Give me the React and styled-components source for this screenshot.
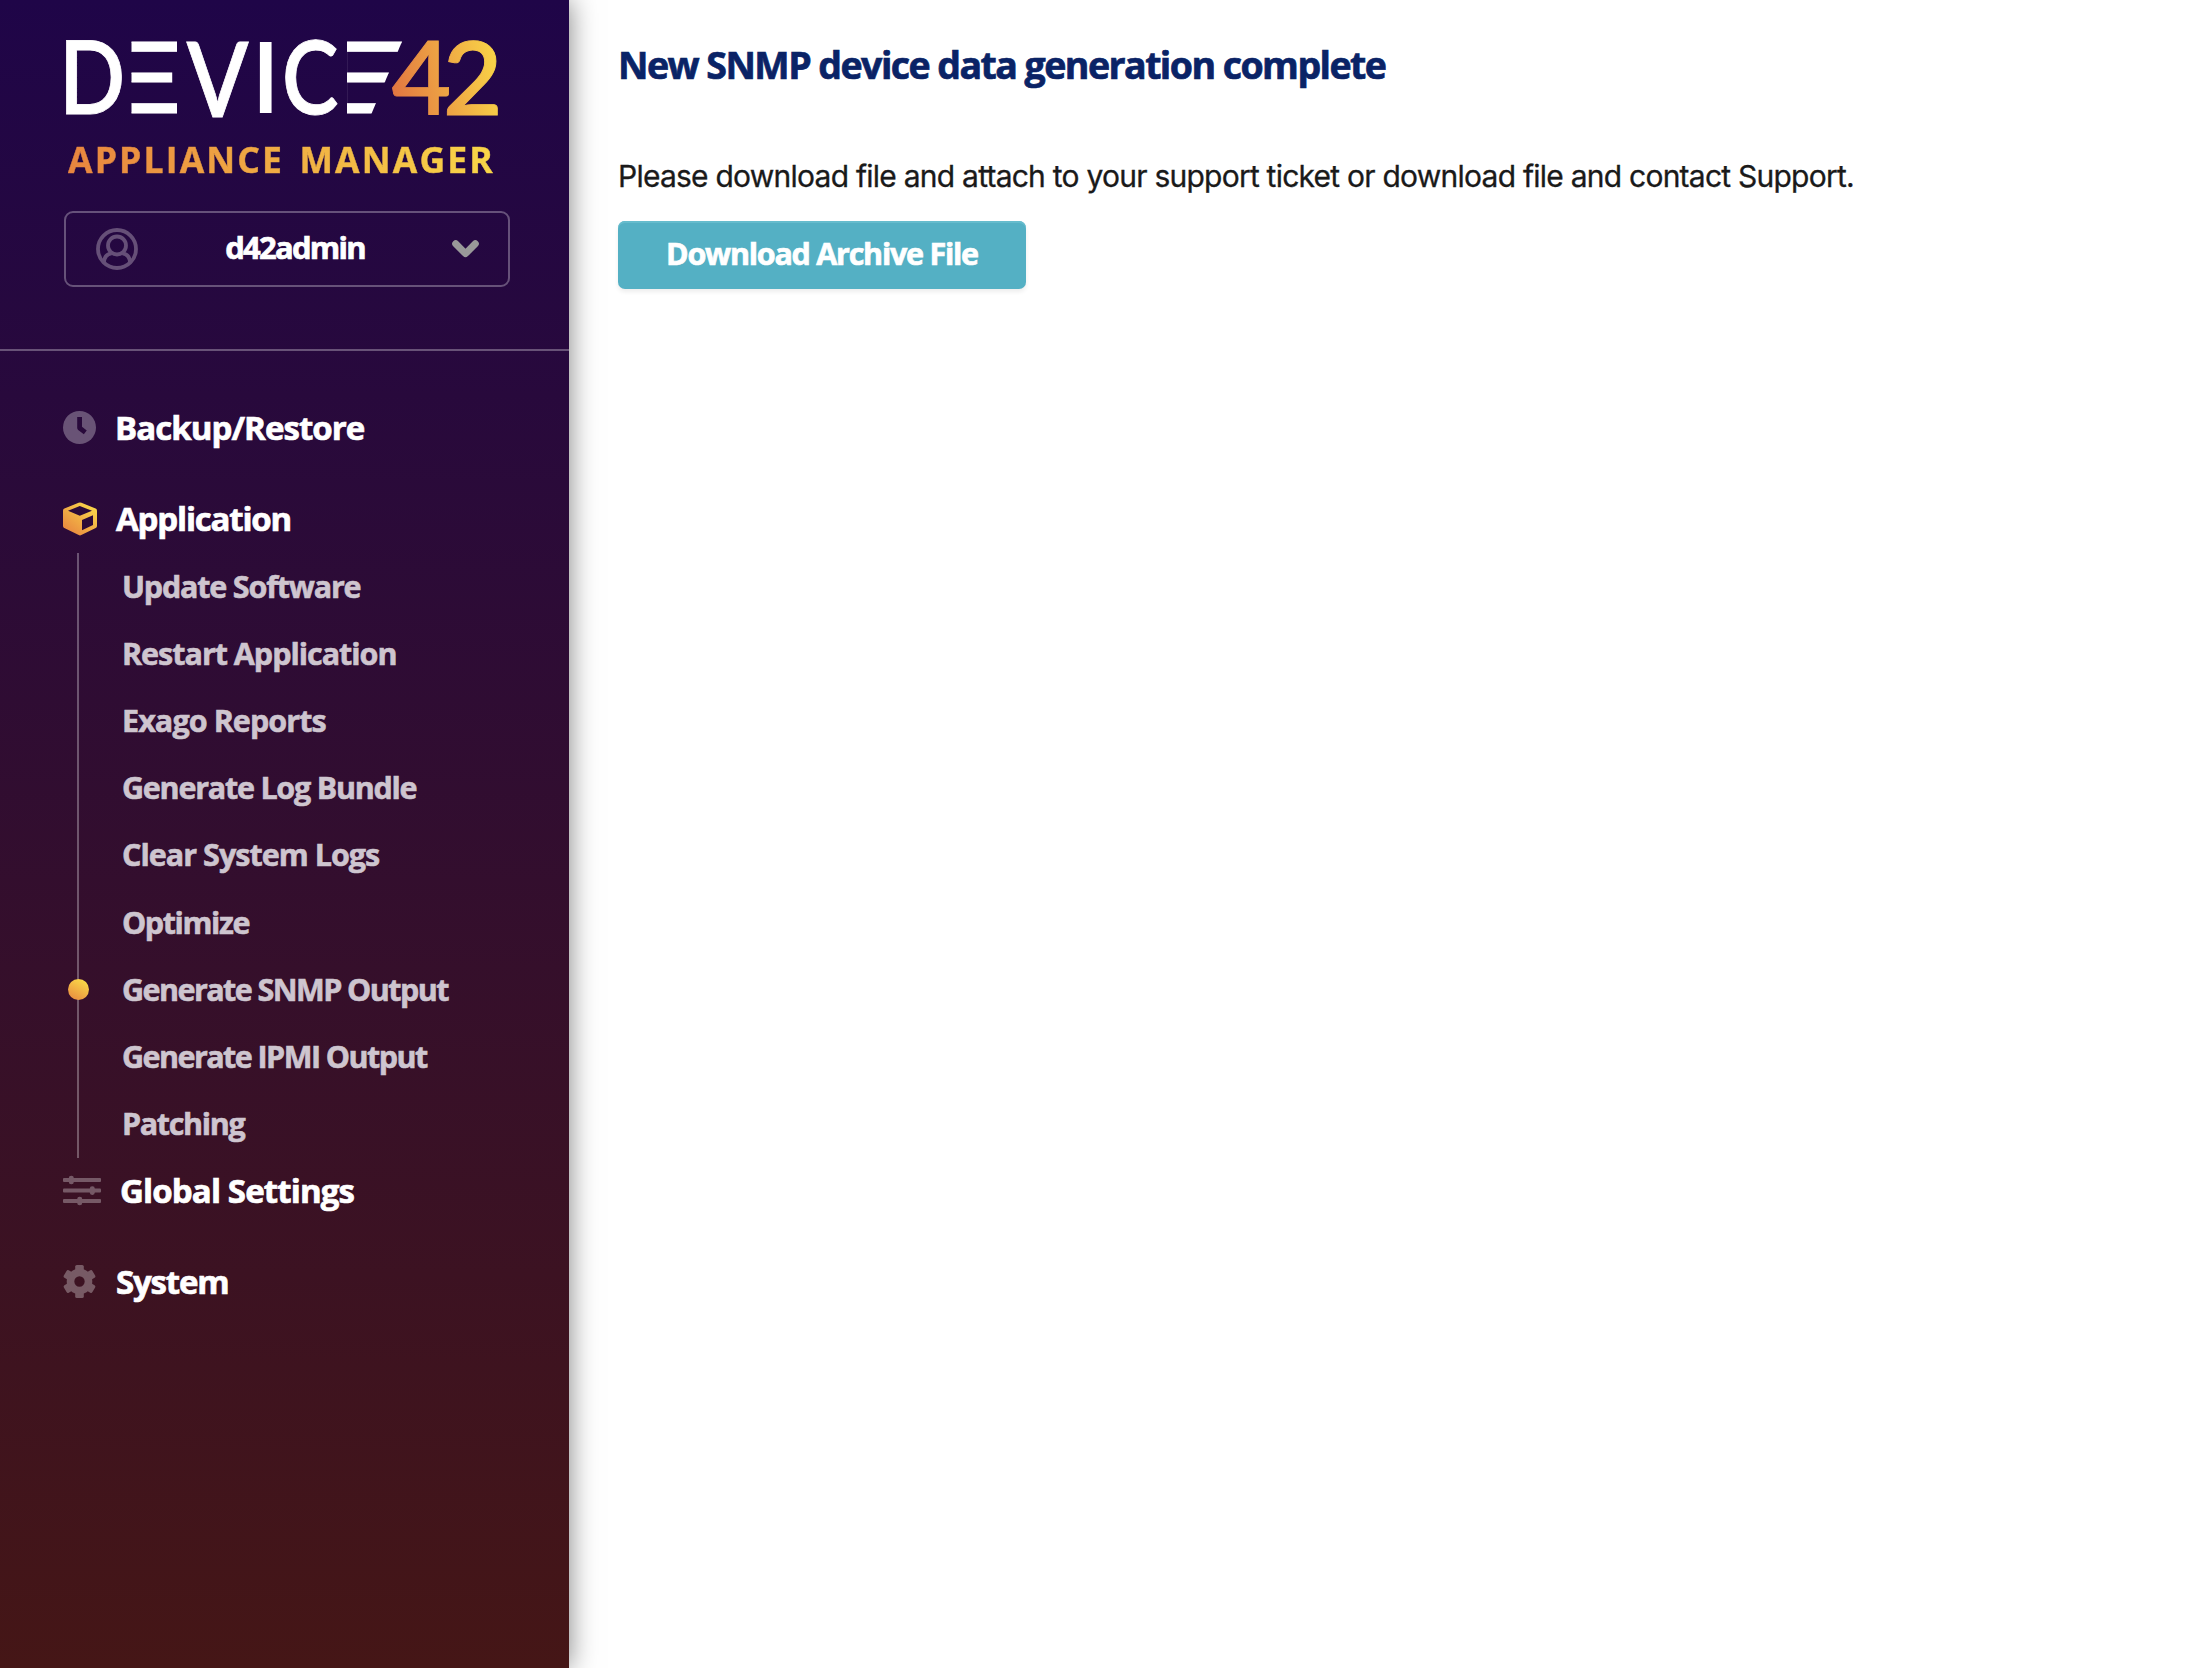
import React from "react";
import styled, { createGlobalStyle } from "styled-components";

const GlobalStyle = createGlobalStyle`
  *, *::before, *::after { box-sizing: border-box; }
  body { margin: 0; background: #fff; }
`;

const uiFont = '"Open Sans", "Noto Sans", sans-serif';
const bodyFont = 'Inter, "Noto Sans", sans-serif';
const muted = "rgba(255, 255, 255, 0.3)";

const Page = styled.div`
  display: flex;
  min-height: 100vh;
  overflow: hidden;
  background: #fff;
`;

const Sidebar = styled.aside`
  flex: 0 0 569px;
  display: flex;
  flex-direction: column;
  background: linear-gradient(180deg, #1f0548 0%, #451616 100%);
  box-shadow: 0 0 26px rgba(0, 0, 0, 0.5);
  font-family: ${uiFont};
`;

const Brand = styled.header`
  display: flex;
  flex-direction: column;
  align-items: flex-start;
  padding: 36px 59px 62px 64px;
  border-bottom: 2px solid ${muted};
`;

const Wordmark = styled.svg`
  display: block;
  width: 436px;
  height: 84px;
  font-family: Lato, sans-serif;
`;

const ProductName = styled.div`
  margin: 19px 0 0 4px;
  font-size: 35.5px;
  line-height: 40px;
  font-weight: 700;
  letter-spacing: 2.15px;
  word-spacing: 4px;
  white-space: nowrap;
  color: transparent;
  background: linear-gradient(90deg, #e8853f 0%, #f9d648 100%);
  background-clip: text;
  -webkit-text-stroke: 0.5px transparent;
`;

const AccountMenu = styled.button`
  display: flex;
  align-items: center;
  justify-content: space-between;
  width: 446px;
  height: 76px;
  margin-top: 32px;
  padding: 0 29px 0 30px;
  border: 2px solid ${muted};
  border-radius: 9px;
  background: none;
  color: #fff;
`;

const AccountName = styled.span`
  padding: 0 0 4px;
  font-family: ${uiFont};
  font-size: 31px;
  font-weight: 700;
  letter-spacing: -1.75px;
  line-height: 40px;
  -webkit-text-stroke: 0.7px currentColor;
`;

const Icon = styled.svg`
  display: block;
  flex: none;
  width: ${(p) => p.$w}px;
  height: ${(p) => p.$h}px;
  overflow: visible;
`;

const Nav = styled.nav`
  display: flex;
  flex-direction: column;
  padding: 43.5px 0 0 63px;
`;

const NavItem = styled.a`
  display: flex;
  align-items: center;
  gap: ${(p) => p.$gap ?? 19}px;
  height: 66px;
  margin-top: ${(p) => p.$top ?? 0}px;
  color: #fff;
  font-size: 33px;
  font-weight: 700;
  letter-spacing: ${(p) => p.$track}px;
  white-space: nowrap;
  -webkit-text-stroke: 0.7px currentColor;
`;

const SubList = styled.ul`
  display: flex;
  flex-direction: column;
  margin: 1.5px 0 0 14px;
  padding: 0;
  border-left: 2px solid ${muted};
  list-style: none;
`;

const SubItem = styled.li`
  position: relative;
  display: flex;
  align-items: center;
  height: 67.2px;
  padding: 0 0 2px 43px;
  color: #cec5cf;
  font-size: 30.5px;
  font-weight: 700;
  letter-spacing: ${(p) => p.$track}px;
  white-space: nowrap;
  -webkit-text-stroke: 0.6px currentColor;
`;

const ActiveDot = styled.span`
  position: absolute;
  left: -11.5px;
  top: 22.5px;
  width: 21px;
  height: 21px;
  border-radius: 50%;
  background: linear-gradient(30deg, #e8853f 0%, #f9d648 85%);
`;

const Main = styled.main`
  flex: 1;
  display: flex;
  flex-direction: column;
  align-items: flex-start;
  padding: 39.5px 0 0 49px;
`;

const Title = styled.h1`
  margin: 0;
  color: #0a2366;
  font-family: ${uiFont};
  font-size: 37.5px;
  font-weight: 700;
  line-height: 50px;
  letter-spacing: -1.55px;
  -webkit-text-stroke: 0.7px currentColor;
`;

const Message = styled.p`
  margin: 66px 0 0;
  color: #1a1a1a;
  font-family: ${bodyFont};
  font-size: 30px;
  line-height: 40px;
  letter-spacing: -0.76px;
  -webkit-text-stroke: 0.3px currentColor;
`;

const DownloadButton = styled.button`
  width: 408px;
  height: 68px;
  margin-top: 25.5px;
  padding: 0 0 5px;
  border: 0;
  border-radius: 7px;
  background: #54b0c4;
  box-shadow: inset 0 2px 0 #66bccd, 0 3px 4px rgba(0, 0, 0, 0.07);
  color: #fff;
  font-family: ${uiFont};
  font-size: 30.5px;
  font-weight: 700;
  letter-spacing: -1.25px;
  -webkit-text-stroke: 0.7px currentColor;
`;

function Logo() {
  return (
    <Wordmark viewBox="64 36 436 84" role="img" aria-label="Device42">
      <defs>
        <linearGradient id="amber" gradientUnits="userSpaceOnUse" x1="393" y1="90" x2="497" y2="70">
          <stop offset="0" stopColor="#e27741" />
          <stop offset="1" stopColor="#f9d247" />
        </linearGradient>
        <clipPath id="bars">
          <rect x="131.5" y="38" width="45.5" height="80" />
        </clipPath>
        <clipPath id="slantedBars">
          <polygon points="347,38 403.5,38 370.5,116 347,116" />
        </clipPath>
      </defs>
      <g fill="#fff" fontWeight="600" stroke="#fff" strokeWidth="0.8">
        <text transform="translate(58.9 113.7) scale(.861 1)" fontSize="101.2">D</text>
        <g clipPath="url(#bars)">
          <text transform="translate(98 112.7) scale(1.6 1)" fontSize="98.2">E</text>
        </g>
        <text transform="translate(186.7 117) scale(.863 1)" fontSize="104">V</text>
        <text x="251.6" y="113" fontSize="98.5" strokeWidth="0">I</text>
        <text transform="translate(281.9 114) scale(.84 1)" fontSize="101.3">C</text>
        <g clipPath="url(#slantedBars)">
          <text transform="translate(312.4 112.7) scale(1.7 1)" fontSize="98.2">E</text>
        </g>
      </g>
      <text x="391.7 443" y="114.5" fontSize="102.5" fontWeight="600" fill="url(#amber)" stroke="url(#amber)" strokeWidth="0.9">42</text>
    </Wordmark>
  );
}

function UserIcon() {
  return (
    <Icon $w={42} $h={42} viewBox="0 0 42 42" fill="none" stroke="#665078" strokeWidth="3.8">
      <circle cx="21" cy="21" r="19" />
      <circle cx="21" cy="17.5" r="9" />
      <path d="M8 34.5C8.3 28.5 11.5 25.8 15.5 25.3M34 34.5C33.7 28.5 30.5 25.8 26.5 25.3" />
    </Icon>
  );
}

function ChevronIcon() {
  return (
    <Icon $w={27} $h={18} viewBox="0 0 27 18" fill="none" stroke="#999" strokeWidth="7" strokeLinecap="round" strokeLinejoin="round">
      <path d="M3.7 3.7 13.5 13.6 23.3 3.7" />
    </Icon>
  );
}

function ClockIcon() {
  return (
    <Icon $w={33} $h={33} viewBox="0 0 33 33">
      <mask id="clockHands">
        <rect width="33" height="33" fill="#fff" />
        <path d="M16.6 6V17L22.3 21.4" fill="none" stroke="#000" strokeWidth="4.8" strokeLinejoin="round" />
      </mask>
      <circle cx="16.5" cy="16.5" r="16.5" fill={muted} mask="url(#clockHands)" />
    </Icon>
  );
}

function BoxIcon() {
  return (
    <Icon $w={34} $h={34} viewBox="0 0 34 34">
      <defs>
        <linearGradient id="boxFill" x1=".1" y1=".95" x2=".85" y2=".05">
          <stop offset="0" stopColor="#e8843f" />
          <stop offset="1" stopColor="#fad84a" />
        </linearGradient>
      </defs>
      <path
        fill="url(#boxFill)"
        fillRule="evenodd"
        d="M15.6.7Q17 .1 18.4.7L32.6 6.6Q34 7.2 34 8.7V24Q34 25.4 32.7 26.1L18.3 33.1Q17 33.7 15.7 33.1L1.3 26.1Q0 25.4 0 24V8.7Q0 7.2 1.4 6.6ZM5 8.8 16.8 13.8 29 8.8 16.8 4ZM19 18V28.2L30 23V13.3Z"
      />
    </Icon>
  );
}

function SlidersIcon() {
  return (
    <Icon $w={38} $h={29} viewBox="0 0 38 29">
      <g fill="#fff" opacity=".3">
        <rect y="2" width="38" height="4" rx="1" />
        <rect y="12.6" width="38" height="4" rx="1" />
        <rect y="23" width="38" height="4" rx="1" />
        <rect x="5.8" y="-.3" width="5" height="8.6" rx="2.4" />
        <rect x="26.8" y="10.3" width="5" height="8.6" rx="2.4" />
        <rect x="14.2" y="20.7" width="5" height="8.6" rx="2.4" />
      </g>
    </Icon>
  );
}

function GearIcon() {
  return (
    <Icon $w={33} $h={33} viewBox="0 0 33 33">
      <g opacity=".3">
        <circle cx="16.5" cy="16.5" r="9" fill="none" stroke="#fff" strokeWidth="7.6" />
        {[0, 60, 120, 180, 240, 300].map((angle) => (
          <rect key={angle} x="12.2" y="0" width="8.6" height="8" rx="1.6" fill="#fff" transform={`rotate(${angle} 16.5 16.5)`} />
        ))}
      </g>
    </Icon>
  );
}

const applicationLinks = [
  { label: "Update Software", track: -1.2 },
  { label: "Restart Application", track: -1.02 },
  { label: "Exago Reports", track: -0.92 },
  { label: "Generate Log Bundle", track: -1.25 },
  { label: "Clear System Logs", track: -0.98 },
  { label: "Optimize", track: -1.4 },
  { label: "Generate SNMP Output", track: -1.57, active: true },
  { label: "Generate IPMI Output", track: -1.56 },
  { label: "Patching", track: -1.35 },
];

export default function App() {
  return (
    <Page>
      <GlobalStyle />
      <Sidebar>
        <Brand>
          <Logo />
          <ProductName>APPLIANCE MANAGER</ProductName>
          <AccountMenu>
            <UserIcon />
            <AccountName>d42admin</AccountName>
            <ChevronIcon />
          </AccountMenu>
        </Brand>
        <Nav>
          <NavItem $track={-0.95}>
            <ClockIcon />
            Backup/Restore
          </NavItem>
          <NavItem $top={25} $track={-1.18}>
            <BoxIcon />
            Application
          </NavItem>
          <SubList>
            {applicationLinks.map((link) => (
              <SubItem key={link.label} $track={link.track}>
                {link.active && <ActiveDot />}
                {link.label}
              </SubItem>
            ))}
          </SubList>
          <NavItem $track={-0.86}>
            <SlidersIcon />
            Global Settings
          </NavItem>
          <NavItem $top={25} $gap={20} $track={-1.2}>
            <GearIcon />
            System
          </NavItem>
        </Nav>
      </Sidebar>
      <Main>
        <Title>New SNMP device data generation complete</Title>
        <Message>Please download file and attach to your support ticket or download file and contact Support.</Message>
        <DownloadButton>Download Archive File</DownloadButton>
      </Main>
    </Page>
  );
}
